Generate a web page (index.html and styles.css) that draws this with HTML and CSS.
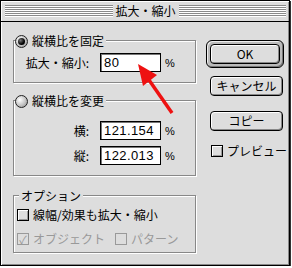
FILE: index.html
```html
<!DOCTYPE html>
<html lang="ja">
<head>
<meta charset="utf-8">
<title>拡大・縮小</title>
<link rel="stylesheet" href="styles.css">
</head>
<body>
<div class="window">
	<div class="titlebar">
		<span class="stripes"></span>
		<span class="title">拡大・縮小</span>
		<span class="stripes"></span>
	</div>
	<div class="content">
		<div class="left">
			<div class="group g-fixed">
				<div class="legend"><span class="radio on"></span>縦横比を固定</div>
				<div class="field">
					<label>拡大・縮小:</label>
					<span class="textbox">80</span>
					<span class="pct">%</span>
				</div>
			</div>
			<div class="group g-free">
				<div class="legend"><span class="radio"></span>縦横比を変更</div>
				<div class="field">
					<label>横:</label>
					<span class="textbox">121.154</span>
					<span class="pct">%</span>
				</div>
				<div class="field second">
					<label>縦:</label>
					<span class="textbox">122.013</span>
					<span class="pct">%</span>
				</div>
			</div>
			<div class="group g-opt">
				<div class="legend">オプション</div>
				<div class="check-row"><span class="checkbox"></span>線幅/効果も拡大・縮小</div>
				<div class="check-row disabled"><span class="checkbox checked">✓</span>オブジェクト<span class="checkbox gap"></span>パターン</div>
			</div>
		</div>
		<div class="right">
			<div class="default-ring"><div class="btn">OK</div></div>
			<div class="btn cancel">キャンセル</div>
			<div class="btn copy">コピー</div>
			<div class="check-row preview"><span class="checkbox"></span>プレビュー</div>
		</div>
	</div>
	<svg class="arrow" width="292" height="268" viewBox="0 0 292 268">
		<line x1="149" y1="80" x2="172" y2="113" stroke="#ee1111" stroke-width="3.5"/>
		<polygon points="138,64 157,75 143,86" fill="#ee1111"/>
	</svg>
</div>
</body>
</html>
```
FILE: styles.css
```css
* {
	box-sizing: border-box;
}
body {
	margin: 0;
	background: #fff;
	font-family: "Noto Sans CJK JP", "Liberation Sans", sans-serif;
	font-size: 12px;
	line-height: 14px;
	color: #000;
}
.window {
	position: relative;
	width: 290px;
	height: 266px;
	border: 1px solid #000;
	box-shadow: 1px 1px 0 #333;
	background: #ddd;
}
.titlebar {
	display: flex;
	align-items: center;
	height: 21px;
	padding: 0 3px 0 4px;
	border-bottom: 1px solid #000;
	box-shadow: inset 1px 1px 0 #fff, inset -1px 0 0 #999;
}
.stripes {
	flex: 1;
	height: 12px;
	background: repeating-linear-gradient(#8a8a8a 0 1px, #fff 1px 2px);
}
.title {
	padding: 0 3px;
	line-height: 18px;
}
.content {
	display: flex;
	height: 243px;
	padding: 18px 0 0 12px;
	box-shadow: inset 1px 0 0 #fff, inset -1px -1px 0 #888;
}
.left {
	width: 183px;
}
.group {
	display: flex;
	flex-direction: column;
	border: 1px solid #888;
	box-shadow: 1px 1px 0 #fff, inset 1px 1px 0 #fff;
}
.legend {
	display: flex;
	align-items: center;
	align-self: flex-start;
	height: 14px;
	margin: -7px 0 0 1px;
	padding-right: 2px;
	background: #ddd;
}
.radio {
	position: relative;
	width: 13px;
	height: 13px;
	margin-right: 4px;
	border: 1px solid #222;
	border-radius: 50%;
	background: radial-gradient(circle at 35% 35%, #fff, #c4c4c4 55%, #888);
}
.radio.on::after {
	content: "";
	position: absolute;
	left: 2px;
	top: 2px;
	width: 7px;
	height: 7px;
	border-radius: 50%;
	background: radial-gradient(circle at 35% 35%, #777, #000 60%);
}
.g-fixed {
	padding-bottom: 10px;
}
.g-free {
	margin-top: 17px;
	padding-bottom: 10px;
}
.g-opt {
	margin-top: 19px;
	padding-bottom: 6px;
}
.g-opt .legend {
	margin-left: 5px;
	padding: 0 2px;
}
.field {
	display: grid;
	grid-template-columns: 75px 61px auto;
	column-gap: 11px;
	align-items: center;
	margin-top: 5px;
}
.g-free .field {
	margin-top: 13px;
}
.g-free .field.second {
	margin-top: 6px;
}
.field label {
	text-align: right;
}
.textbox {
	height: 19px;
	padding-left: 3px;
	border: 1px solid #000;
	box-shadow: inset 1px 1px 0 #777;
	background: #fff;
	font-family: "Liberation Sans", sans-serif;
	font-size: 13px;
	line-height: 17px;
	letter-spacing: 0.4px;
}
.pct {
	margin-left: -7px;
	font-family: "Liberation Sans", sans-serif;
	font-size: 11px;
}
.check-row {
	display: flex;
	align-items: center;
	height: 14px;
	margin: 5px 0 0 3px;
}
.check-row + .check-row {
	margin-top: 10px;
}
.checkbox {
	display: flex;
	align-items: center;
	justify-content: center;
	width: 12px;
	height: 12px;
	margin-right: 4px;
	border: 1px solid #000;
	box-shadow: inset 1px 1px 0 #fff, inset -1px -1px 0 #999;
	background: #ddd;
	font-size: 11px;
	line-height: 10px;
}
.checkbox.gap {
	margin-left: 10px;
}
.disabled {
	color: #999;
}
.disabled .checkbox {
	border-color: #999;
	box-shadow: none;
}
.right {
	margin-left: 10px;
}
.default-ring {
	width: 78px;
	height: 28px;
	padding: 3px;
	border: 1px solid #000;
	border-radius: 6px;
	background: #bbb;
	box-shadow: inset 1px 1px 0 #eee, inset -1px -1px 0 #777;
}
.btn {
	display: flex;
	align-items: center;
	justify-content: center;
	width: 70px;
	height: 20px;
	border: 1px solid #000;
	border-radius: 4px;
	background: #ddd;
	box-shadow: inset 1px 1px 0 #fff, inset -1px -1px 0 #888;
}
.cancel,
.copy {
	width: 73px;
	margin: 8px 0 0 4px;
}
.copy {
	margin-top: 15px;
}
.preview {
	margin: 13px 0 0 5px;
}
.arrow {
	position: absolute;
	left: -1px;
	top: -1px;
	pointer-events: none;
}
```
